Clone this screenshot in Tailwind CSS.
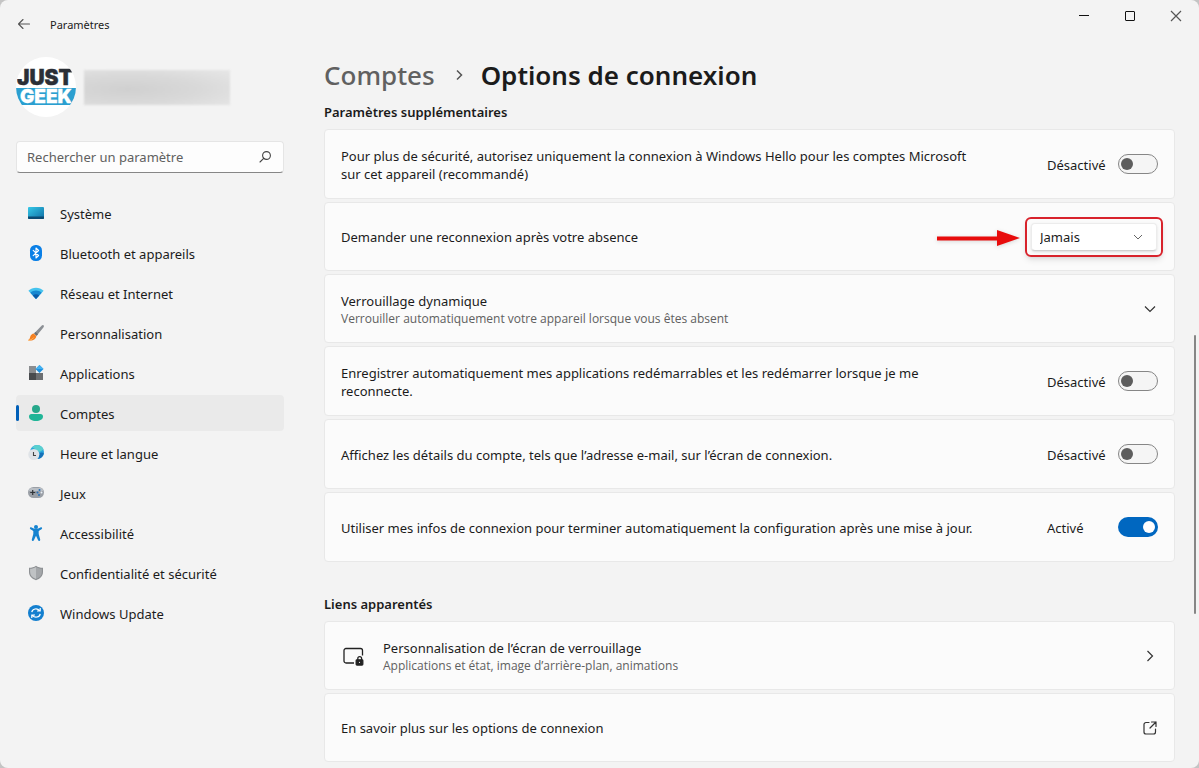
<!DOCTYPE html>
<html lang="fr">
<head>
<meta charset="utf-8">
<meta name="viewport" content="width=device-width, initial-scale=1">
<title>Paramètres</title>
<script src="https://cdn.jsdelivr.net/npm/@tailwindcss/browser@4"></script>
</head>
<body class="bg-[#c4c4c4] font-['Noto_Sans','Open_Sans',sans-serif] text-[13px] leading-[18px] text-[#1b1b1b]">
<div class="relative flex h-screen flex-col overflow-hidden rounded-lg bg-[#f3f3f3]">
  <header class="flex h-12 shrink-0 items-start justify-between">
    <div class="flex h-12 items-center pl-4">
      <button aria-label="Retour" class="flex size-4 items-center justify-center">
        <svg class="size-4" viewBox="0 0 16 16" fill="none" stroke="#555" stroke-width="1.1" stroke-linecap="round" stroke-linejoin="round"><path d="M13.500 8H2.500M7 3.500 2.500 8 7 12.500"/></svg>
      </button>
      <h1 class="pt-0.5 pl-[18px] text-[11px]">Paramètres</h1>
    </div>
    <div class="flex h-8">
      <button aria-label="Réduire" class="flex w-[46px] items-center justify-center"><svg class="size-3" viewBox="0 0 12 12" stroke="#111" fill="none"><path d="M1 5.500h10"/></svg></button>
      <button aria-label="Agrandir" class="flex w-[46px] items-center justify-center"><svg class="size-3" viewBox="0 0 12 12" stroke="#111" fill="none"><rect x="1.500" y="1.500" width="9" height="9" rx=".5"/></svg></button>
      <button aria-label="Fermer" class="flex w-[46px] items-center justify-center"><svg class="size-3" viewBox="0 0 12 12" stroke="#555" stroke-width="1.200" fill="none"><path d="m1 1 10 10M11 1 1 11"/></svg></button>
    </div>
  </header>
  <div class="flex min-h-0 flex-1">
    <aside class="w-[300px] shrink-0 px-4 pt-[9px]">
      <div class="flex items-center gap-2">
        <svg class="size-[60px] rounded-full bg-white font-['Inter',sans-serif] font-black" viewBox="0 0 60 60" role="img" aria-label="Just Geek">
          <rect y="31" width="60" height="17" fill="#2b9fd0"/>
          <text x="29" y="28" text-anchor="middle" font-size="21" fill="#2b2f36" stroke="#2b2f36" stroke-width=".4">JUST</text>
          <text x="30" y="46" text-anchor="middle" font-size="19" fill="#fff" stroke="#fff" stroke-width=".3">GEEK</text>
        </svg>
        <div class="h-[35px] w-[146px] bg-radial-[at_30%_55%] from-[#d0d0d0] via-[#d9d9d9] to-[#e7e7e7] blur-[1px]"></div>
      </div>
      <div class="mt-6 flex h-8 items-center rounded border border-b border-[#e5e5e5] border-b-[#868686] bg-[#fdfdfd] pr-[10px] pl-[10px]">
        <input type="search" aria-label="Rechercher un paramètre" placeholder="Rechercher un paramètre" class="min-w-0 flex-1 bg-transparent outline-none placeholder:text-[#606060]">
        <svg class="size-4" viewBox="0 0 16 16" fill="none" stroke="#444" stroke-width="1.1" stroke-linecap="round"><circle cx="9.500" cy="6.500" r="3.900"/><path d="M6.700 9.300 3 13"/></svg>
      </div>
      <nav class="mt-[22px] flex flex-col gap-1">
        <a href="#" class="flex h-9 items-center gap-4 rounded pl-3"><svg class="size-4" viewBox="0 0 16 16"><defs><linearGradient id="g1" x1="0" y1="0" x2="1" y2="1"><stop stop-color="#35c9e8"/><stop offset="1" stop-color="#0f6da4"/></linearGradient></defs><rect y="2" width="16" height="12" rx="1" fill="url(#g1)"/><path d="M0 11.500h16V13a1 1 0 0 1-1 1H1a1 1 0 0 1-1-1z" fill="#0b4a72"/></svg><span class="pt-0.5">Système</span></a>
        <a href="#" class="flex h-9 items-center gap-4 rounded pl-3"><svg class="size-4" viewBox="0 0 16 16" fill="none"><rect x="2" width="12" height="16" rx="5.500" fill="#0a7fe6"/><path d="m5.200 5.300 5.400 5.200L8 13V3l2.600 2.500-5.400 5.200" stroke="#fff" stroke-width="1.100" stroke-linejoin="round" stroke-linecap="round"/></svg><span class="pt-0.5">Bluetooth et appareils</span></a>
        <a href="#" class="flex h-9 items-center gap-4 rounded pl-3"><svg class="size-4" viewBox="0 0 16 16"><path d="M.4 5.700C4.600 1.700 11.400 1.700 15.600 5.700L8 14z" fill="#45c3ee"/><path d="M2.300 7.800c3.200-3 8.200-3 11.400 0L8 14z" fill="#1788d0"/><path d="M4.700 10.400c1.900-1.700 4.700-1.700 6.600 0L8 14z" fill="#0a5ba8"/></svg><span class="pt-0.5">Réseau et Internet</span></a>
        <a href="#" class="flex h-9 items-center gap-4 rounded pl-3"><svg class="size-4" viewBox="0 0 16 16"><path d="M15.600.4c.6.6.3 1.300-.2 2L9 10.300 6.500 8 13.800.6c.6-.6 1.300-.7 1.800-.2z" fill="#8b8f94"/><path d="m7.500 7 2.500 2.200-1.500 1.700L6 8.600z" fill="#6b6f73"/><path d="M5.800 8.400 8.300 11c-.1 3.300-4 5.400-8.200 4.200 1.600-.7 1.600-2 2.200-3.700.6-1.900 2-3 3.500-3.100z" fill="#f48022"/><path d="M.2 15.200c1.600.1 4-.6 5.500-2.700" fill="none" stroke="#ffb35c"/></svg><span class="pt-0.5">Personnalisation</span></a>
        <a href="#" class="flex h-9 items-center gap-4 rounded pl-3"><svg class="size-4" viewBox="0 0 16 16"><path d="M1 1h7v7H1z" fill="#8a8d90"/><path d="M1 8h7v7H1z" fill="#484b4e"/><path d="M8 8h7v7H8z" fill="#6c6f72"/><path d="M11.500 0 15.500 4l-4 4-4-4z" fill="#1c8fe0"/><path d="m11.500 0 4 4h-8z" fill="#43b2f1"/></svg><span class="pt-0.5">Applications</span></a>
        <a href="#" aria-current="page" class="relative flex h-9 items-center gap-4 rounded bg-[#eaeaea] pl-3"><span class="absolute top-[10px] left-0 h-4 w-[3px] rounded-full bg-[#005fb8]"></span><svg class="size-4" viewBox="0 0 16 16"><circle cx="8" cy="4" r="4" fill="#27a88b"/><path d="M3.500 9h9A2.500 2.500 0 0 1 15 11.500c0 2.800-3 4.500-7 4.500s-7-1.700-7-4.500A2.500 2.500 0 0 1 3.500 9z" fill="#20b597"/></svg><span class="pt-0.5">Comptes</span></a>
        <a href="#" class="flex h-9 items-center gap-4 rounded pl-3"><svg class="size-4" viewBox="0 0 16 16"><circle cx="9" cy="7" r="7" fill="#2ba6dc"/><path d="M9 0a7 7 0 0 1 6.500 4.500c-2.500 1-3 3-5.500 2S7 3 4 2.500A7 7 0 0 1 9 0z" fill="#5ad0cf"/><path d="M12 8c1.500-.8 3-.5 3.900 0A7 7 0 0 1 10 14z" fill="#1671b8"/><circle cx="5.800" cy="9.500" r="5.500" fill="#dfe3e7"/><path d="M5.500 7v3.500H8" fill="none" stroke="#444" stroke-width="1.100"/></svg><span class="pt-0.5">Heure et langue</span></a>
        <a href="#" class="flex h-9 items-center gap-4 rounded pl-3"><svg class="size-4" viewBox="0 0 16 16"><rect y="2" width="16" height="11" rx="5.500" fill="#9a9fa6"/><path d="M3 3h10c1.500.5 2.200 1.500 2.600 3H.4C.8 4.500 1.500 3.500 3 3z" fill="#b9bec4"/><path d="M4.700 5v5M2.200 7.500h5" stroke="#303438" stroke-width="1.200"/><circle cx="11.500" cy="5" r="1" fill="#2670b8"/><circle cx="9.500" cy="7.500" r="1" fill="#2670b8"/><circle cx="13.500" cy="7.500" r="1" fill="#e9f1f8"/><circle cx="11" cy="10" r="1" fill="#2670b8"/></svg><span class="pt-0.5">Jeux</span></a>
        <a href="#" class="flex h-9 items-center gap-4 rounded pl-3"><svg class="size-4" viewBox="0 0 16 16"><circle cx="8" cy="2" r="2" fill="#1583d0"/><path d="M2 2.800c.4-.7 1-.6 1.600-.3 2.800 1.700 6 1.700 8.800 0 .6-.3 1.200-.4 1.600.3.300.6 0 1.200-.5 1.500L10.700 6v3l1.500 5.500c.1.600-.1 1.200-.7 1.400-.6.200-1.200-.1-1.400-.7L8 10.700l-2.100 4.500c-.2.600-.8.900-1.400.7-.6-.2-.8-.8-.7-1.400L5.300 9V6L2.500 4.300C2 4 1.700 3.400 2 2.800z" fill="#1583d0"/></svg><span class="pt-0.5">Accessibilité</span></a>
        <a href="#" class="flex h-9 items-center gap-4 rounded pl-3"><svg class="size-4" viewBox="0 0 16 16"><path d="M8 .8c2 1.500 4.200 2 7 2V7c0 4-2.800 6.800-7 8.200C3.800 13.800 1 11 1 7V2.800c2.800 0 5-.5 7-2z" fill="#8d9093"/><path d="M8 2c1.800 1.200 3.600 1.700 5.900 1.800V7c0 3.300-2.200 5.600-5.900 7z" fill="#a3a6a9"/><path d="M8 2C6.200 3.200 4.400 3.700 2.100 3.800V7c0 3.300 2.200 5.600 5.900 7z" fill="#bfc2c4"/></svg><span class="pt-0.5">Confidentialité et sécurité</span></a>
        <a href="#" class="flex h-9 items-center gap-4 rounded pl-3"><svg class="size-4" viewBox="0 0 16 16" fill="none"><circle cx="8" cy="8" r="8" fill="#137fcf"/><path d="M3.800 7.200C4.300 3.700 9 2.700 11.700 5.600M12.200 3v3H9M12.200 8.800c-.5 3.500-5.200 4.500-7.900 1.600M3.800 13v-3H7" stroke="#fff" stroke-width="1.200"/></svg><span class="pt-0.5">Windows Update</span></a>
      </nav>
    </aside>
    <main class="min-w-0 flex-1 pt-2 pr-6 pl-6">
      <div class="flex h-[38px] items-center text-[26px] leading-[38px] font-semibold">
        <a href="#" class="font-medium text-[#606060]">Comptes</a>
        <svg class="mr-4 ml-[18px] size-3" viewBox="0 0 12 12" fill="none" stroke="#555" stroke-width="1.500"><path d="m4 1.500 4.500 4.500L4 10.500"/></svg>
        <h2>Options de connexion</h2>
      </div>
      <h3 class="mt-[9px] font-semibold">Paramètres supplémentaires</h3>
      <div class="mt-2 flex flex-col gap-[3px]">
        <div class="flex min-h-[70px] items-center justify-between rounded border border-[#e8e8e8] bg-[#fbfbfb] px-4">
          <label for="t1" class="max-w-[640px] pt-0.5">Pour plus de sécurité, autorisez uniquement la connexion à Windows Hello pour les comptes Microsoft sur cet appareil (recommandé)</label>
          <div class="flex items-center gap-3"><span class="w-[59px] pt-0.5">Désactivé</span><input id="t1" type="checkbox" role="switch" class="flex h-5 w-10 appearance-none items-center rounded-full border border-[#868686] bg-[#f5f5f5] pl-[2px] before:size-3 before:rounded-full before:bg-[#5d5d5d]"></div>
        </div>
        <div class="flex min-h-[69px] items-center justify-between rounded border border-[#e8e8e8] bg-[#fbfbfb] pr-[11px] pl-4">
          <label for="s1">Demander une reconnexion après votre absence</label>
          <div class="flex items-center gap-1">
            <svg class="h-5 w-[84px] drop-shadow-sm" viewBox="0 0 84 20" fill="#e80c0c"><path d="M0 9.500h60V3l23 8-23 8v-5.500H0z"/></svg>
            <div class="relative h-10 w-[138px] rounded-md border-2 border-[#d8232c] p-1 shadow-md">
              <select id="s1" class="h-full w-full appearance-none rounded border border-[#ececec] border-b-[#d0d0d0] bg-white pl-2 shadow-sm"><option>Jamais</option></select>
              <svg class="pointer-events-none absolute top-[13px] right-[18px] size-[10px]" viewBox="0 0 10 10" fill="none" stroke="#666"><path d="m1 3 4 4 4-4"/></svg>
            </div>
          </div>
        </div>
        <button class="flex min-h-[69px] items-center justify-between rounded border border-[#e8e8e8] bg-[#fbfbfb] pr-[18px] pl-4 text-left">
          <span class="flex flex-col pt-0.5"><span>Verrouillage dynamique</span><span class="font-['Open_Sans',sans-serif] text-[12px] text-[#606060]">Verrouiller automatiquement votre appareil lorsque vous êtes absent</span></span>
          <svg class="size-3" viewBox="0 0 12 12" fill="none" stroke="#333" stroke-width="1.200"><path d="m1 3.500 5 5 5-5"/></svg>
        </button>
        <div class="flex min-h-[70px] items-center justify-between rounded border border-[#e8e8e8] bg-[#fbfbfb] px-4">
          <label for="t2" class="max-w-[640px] pt-0.5">Enregistrer automatiquement mes applications redémarrables et les redémarrer lorsque je me reconnecte.</label>
          <div class="flex items-center gap-3"><span class="w-[59px] pt-0.5">Désactivé</span><input id="t2" type="checkbox" role="switch" class="flex h-5 w-10 appearance-none items-center rounded-full border border-[#868686] bg-[#f5f5f5] pl-[2px] before:size-3 before:rounded-full before:bg-[#5d5d5d]"></div>
        </div>
        <div class="flex min-h-[70px] items-center justify-between rounded border border-[#e8e8e8] bg-[#fbfbfb] px-4">
          <label for="t3" class="pt-0.5">Affichez les détails du compte, tels que l’adresse e-mail, sur l’écran de connexion.</label>
          <div class="flex items-center gap-3"><span class="w-[59px] pt-0.5">Désactivé</span><input id="t3" type="checkbox" role="switch" class="flex h-5 w-10 appearance-none items-center rounded-full border border-[#868686] bg-[#f5f5f5] pl-[2px] before:size-3 before:rounded-full before:bg-[#5d5d5d]"></div>
        </div>
        <div class="flex min-h-[70px] items-center justify-between rounded border border-[#e8e8e8] bg-[#fbfbfb] px-4">
          <label for="t4" class="pt-0.5">Utiliser mes infos de connexion pour terminer automatiquement la configuration après une mise à jour.</label>
          <div class="flex items-center gap-3"><span class="w-[59px] pt-0.5">Activé</span><input id="t4" type="checkbox" role="switch" checked class="flex h-5 w-10 appearance-none items-center justify-end rounded-full bg-[#0067c0] pr-[3px] before:size-3 before:rounded-full before:bg-white"></div>
        </div>
      </div>
      <h3 class="mt-[33px] font-semibold">Liens apparentés</h3>
      <div class="mt-2 flex flex-col gap-[3px]">
        <a href="#" class="flex min-h-[69px] items-center rounded border border-[#e8e8e8] bg-[#fbfbfb] pr-[18px] pl-4">
          <svg class="mr-[18px] ml-0.5 h-5 w-[22px]" viewBox="0 0 22 20" fill="none" stroke="#222" stroke-width="1.300"><path d="M11 17H3a2 2 0 0 1-2-2V4.500a2 2 0 0 1 2-2h14.500a2 2 0 0 1 2 2V9.500"/><path d="M14.800 14v-1.500a1.900 1.900 0 0 1 3.800 0V14"/><rect x="13.200" y="13.800" width="6.600" height="5.200" rx=".8" fill="#222"/><circle cx="16.500" cy="16.300" r=".6" fill="#fff" stroke="none"/></svg>
          <span class="flex flex-1 flex-col pt-0.5"><span>Personnalisation de l’écran de verrouillage</span><span class="font-['Open_Sans',sans-serif] text-[12px] text-[#606060]">Applications et état, image d’arrière-plan, animations</span></span>
          <svg class="size-3" viewBox="0 0 12 12" fill="none" stroke="#333" stroke-width="1.200"><path d="m3.500 1 5 5-5 5"/></svg>
        </a>
        <a href="#" class="flex min-h-[69px] items-center justify-between rounded border border-[#e8e8e8] bg-[#fbfbfb] pr-4 pl-4">
          <span>En savoir plus sur les options de connexion</span>
          <svg class="size-4" viewBox="0 0 16 16" fill="none" stroke="#333" stroke-width="1.200" stroke-linecap="round" stroke-linejoin="round"><path d="M7 2.500H4a2 2 0 0 0-2 2V12a2 2 0 0 0 2 2h7.500a2 2 0 0 0 2-2V9M9.500 2H14v4.500M14 2 8 8"/></svg>
        </a>
      </div>
    </main>
  </div>
  <div class="absolute top-[335px] right-[3px] h-[279px] w-[2px] rounded-full bg-[#868686]"></div>
</div>
</body>
</html>
